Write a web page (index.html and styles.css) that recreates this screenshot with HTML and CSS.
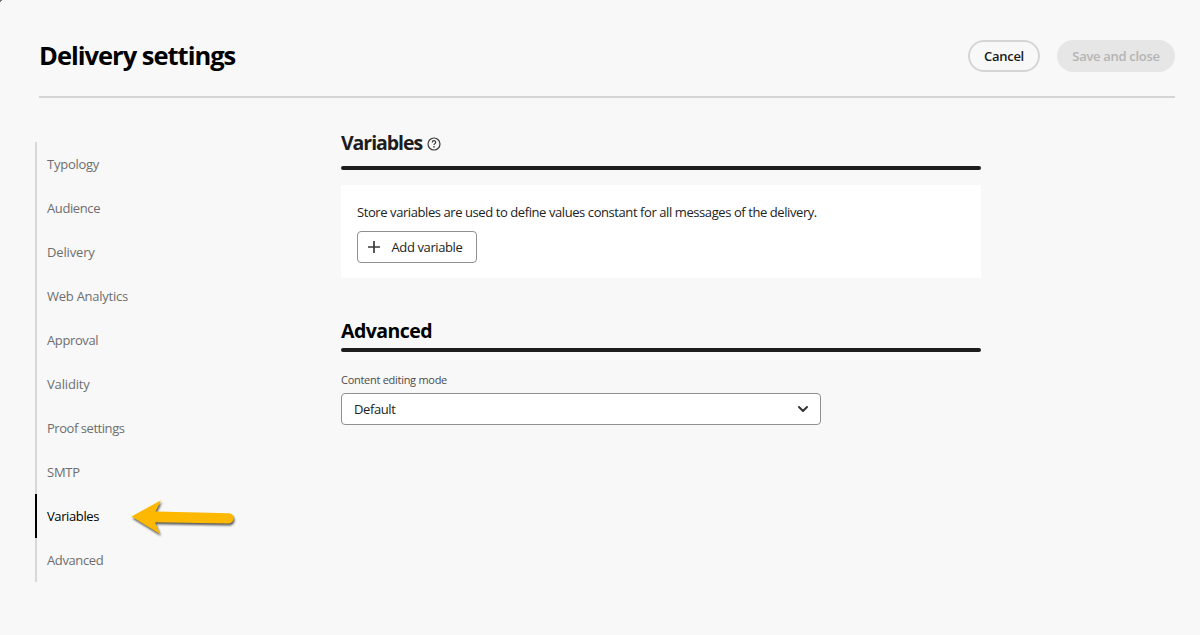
FILE: index.html
```html
<!DOCTYPE html>
<html lang="en">
<head>
<meta charset="utf-8">
<title>Delivery settings</title>
<link rel="stylesheet" href="styles.css">
</head>
<body>
<header class="header">
  <h1 class="title">Delivery settings</h1>
  <div class="actions">
    <button class="btn btn-outline">Cancel</button>
    <button class="btn btn-disabled" disabled>Save and close</button>
  </div>
</header>
<div class="layout">
  <nav class="nav">
    <a class="nav-item w-tight">Typology</a>
    <a class="nav-item">Audience</a>
    <a class="nav-item w-loose">Delivery</a>
    <a class="nav-item w-tight">Web Analytics</a>
    <a class="nav-item">Approval</a>
    <a class="nav-item w-loose">Validity</a>
    <a class="nav-item w-snug">Proof settings</a>
    <a class="nav-item w-tight">SMTP</a>
    <a class="nav-item active">Variables
      <svg class="arrow" width="112" height="46" viewBox="0 0 112 46"><path d="M4.500 20.5 34 4.200 28.500 15.500 102 17.200A5.200 5.200 0 0 1 102 27.500L28 26.300 33 38Z" fill="#fdb902"/></svg>
    </a>
    <a class="nav-item">Advanced</a>
  </nav>
  <main class="main">
    <section class="section">
      <h2 class="heading heading-variables">Variables
        <svg class="help" width="14" height="14" viewBox="0 0 14 14" fill="none" stroke="#3a3a3a"><circle cx="7" cy="7" r="6" stroke-width="1.2"/><path d="M5.300 5.500C5.300 3.100 8.800 3.200 8.700 5.300C8.600 6.700 7 6.600 7 8.100" stroke-width="1.250"/><circle cx="7" cy="9.900" r=".8" fill="#3a3a3a" stroke="none"/></svg>
      </h2>
      <div class="rule"></div>
      <div class="card">
        <p class="text">Store variables are used to define values constant for all messages of the delivery.</p>
        <button class="add"><svg width="12" height="12" viewBox="0 0 12 12"><path d="M6 .6V11.400M.6 6H11.400" stroke="#3a3a3a" stroke-width="1.700" stroke-linecap="round"/></svg><span>Add variable</span></button>
      </div>
    </section>
    <section class="section">
      <h2 class="heading heading-advanced">Advanced</h2>
      <div class="rule"></div>
      <div class="label">Content editing mode</div>
      <div class="select"><span>Default</span><svg width="12" height="8" viewBox="0 0 12 8"><path d="M2 2 6 6 10 2" fill="none" stroke="#333" stroke-width="2" stroke-linecap="round" stroke-linejoin="round"/></svg></div>
    </section>
  </main>
</div>
</body>
</html>
```
FILE: styles.css
```css
* { box-sizing: border-box; }
body {
  margin: 0;
  min-height: 635px;
  padding: 0 25px 0 35px;
  background: linear-gradient(135deg, #777 0 1.5px, transparent 2px), #f8f8f8;
  font: 13px/20px "Open Sans", "Noto Sans", sans-serif;
  letter-spacing: -0.39px;
  color: #222;
}
.header {
  display: flex;
  align-items: center;
  justify-content: space-between;
  height: 98px;
  margin-left: 4px;
  padding-top: 15px;
  border-bottom: 2px solid #d5d5d5;
}
.title {
  margin: 0;
  padding-bottom: 2px;
  font-size: 25.5px;
  line-height: 32px;
  font-weight: 700;
  letter-spacing: -1px;
  color: #000;
}
.actions { display: flex; gap: 17px; }
.btn {
  height: 32px;
  padding: 0;
  border-radius: 16px;
  border: 2px solid #d5d5d5;
  background: transparent;
  font: 600 13px/20px "Open Sans", "Noto Sans", sans-serif;
  letter-spacing: -0.3px;
  color: #1a1a1a;
}
.btn-outline { width: 72px; }
.btn-disabled { width: 118px; border-color: #e6e6e6; background: #e6e6e6; color: #b4b4b4; }
.layout { display: flex; padding-top: 32px; }
.nav {
  display: flex;
  flex-direction: column;
  width: 306px;
  margin-top: 12px;
}
.nav-item {
  position: relative;
  height: 44px;
  padding-left: 10px;
  border-left: 2px solid #d8d8d8;
  line-height: 44px;
  color: #6e6e6e;
}
.w-snug { letter-spacing: -0.45px; }
.w-tight { letter-spacing: -0.25px; }
.w-loose { letter-spacing: -0.16px; }
.active { border-color: #000; color: #000; }
.arrow {
  position: absolute;
  left: 90px;
  top: 2px;
  filter: drop-shadow(1px 2px 1px rgba(0, 0, 0, .65));
}
.main { width: 640px; padding-top: .5px; }
.heading {
  display: flex;
  align-items: center;
  height: 26px;
  margin: 0;
  font-size: 19.5px;
  font-weight: 700;
}
.heading-variables { padding-bottom: 1px; letter-spacing: -1.05px; color: #1d1d1d; }
.heading-advanced { padding-top: 2px; letter-spacing: -0.55px; color: #000; }
.rule { height: 4px; border-radius: 2px; background: #1d1d1d; }
.heading-variables + .rule { margin-top: 9px; }
.heading-advanced + .rule { margin-top: 5px; }
.help { margin: 1px 0 0 5px; }
.card {
  height: 93px;
  margin: 15.5px 0 39px;
  padding: 17px 16px 0;
  background: #fff;
}
.text { margin: 0 0 9px; letter-spacing: -0.42px; }
.add {
  display: flex;
  align-items: center;
  gap: 11.5px;
  width: 120px;
  height: 32px;
  padding: 0 0 0 10px;
  border: 1px solid #909090;
  border-radius: 4px;
  background: #fff;
  font: inherit;
  letter-spacing: inherit;
  color: #222;
}
.label { margin: 18px 0 3px; font-size: 11px; letter-spacing: -0.28px; color: #4b4b4b; }
.select {
  display: flex;
  align-items: center;
  justify-content: space-between;
  width: 480px;
  height: 32px;
  padding: 0 11px 0 12px;
  border: 1px solid #909090;
  border-radius: 4px;
  background: #fff;
}
```
